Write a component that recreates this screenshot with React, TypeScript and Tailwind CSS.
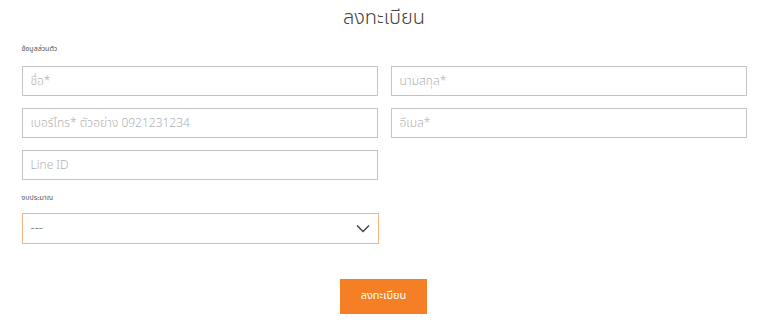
import React from "react";

const font = { fontFamily: '"Noto Sans Thai", "Noto Sans", "Liberation Sans", sans-serif' };

export default function App() {
  return (
    <div className="bg-white min-h-[323px] w-full text-[#444]" style={font}>
      <div className="w-[725px] mx-auto flex flex-col">
        <h1 className="text-center text-[20px] leading-[24px] pt-[6px] text-[#444] font-light">ลงทะเบียน</h1>
        <div className="text-[7px] leading-[10px] mt-[14px] text-[#555]">ข้อมูลส่วนตัว</div>
        <div className="grid grid-cols-2 gap-x-[13px] gap-y-[12px] mt-[12px]">
          <Field placeholder="ชื่อ*" />
          <Field placeholder="นามสกุล*" />
          <Field placeholder="เบอร์โทร* ตัวอย่าง 0921231234" />
          <Field placeholder="อีเมล*" />
          <Field placeholder="Line ID" />
        </div>
        <div className="text-[7px] leading-[10px] mt-[13px] text-[#555]">งบประมาณ</div>
        <div className="w-[357px] h-[31px] mt-[10px] border border-[#f6b482] flex items-center justify-between px-[8px]">
          <span className="text-[13px] text-[#666] font-light">---</span>
          <svg width="14" height="9" viewBox="0 0 14 9" fill="none" stroke="#444" strokeWidth="1.5">
            <path d="M1 1.5 L7 7.5 L13 1.5" />
          </svg>
        </div>
        <div className="flex justify-center mt-[35px]">
          <button className="w-[87px] h-[35px] bg-[#f47f24] text-white text-[11px] ml-[-1px]">ลงทะเบียน</button>
        </div>
      </div>
    </div>
  );
}

function Field({ placeholder }: { placeholder: string }) {
  return (
    <input
      placeholder={placeholder}
      className="h-[30px] w-full border border-[#c4c4c4] px-[8px] text-[12px] font-light placeholder:text-[#b0b0b0] outline-none"
      style={font}
    />
  );
}
